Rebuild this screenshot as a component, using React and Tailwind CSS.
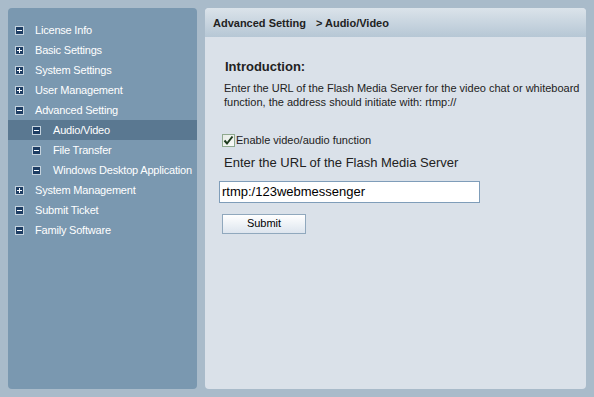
import React, { useState } from "react";

const menu = [
  { label: "License Info", icon: "minus" },
  { label: "Basic Settings", icon: "plus" },
  { label: "System Settings", icon: "plus" },
  { label: "User Management", icon: "plus" },
  { label: "Advanced Setting", icon: "minus" },
  { label: "Audio/Video", icon: "minus", sub: true, active: true },
  { label: "File Transfer", icon: "minus", sub: true },
  { label: "Windows Desktop Application", icon: "minus", sub: true },
  { label: "System Management", icon: "plus" },
  { label: "Submit Ticket", icon: "minus" },
  { label: "Family Software", icon: "minus" },
];

const TreeIcon = ({ type }) => (
  <span className="relative block w-[9px] h-[9px] bg-[#1d3d63] border border-[#c5d3de] shrink-0">
    <span className="absolute left-[1px] top-[3px] w-[5px] h-[1px] bg-white" />
    {type === "plus" && (
      <span className="absolute left-[3px] top-[1px] w-[1px] h-[5px] bg-white" />
    )}
  </span>
);

const font = { fontFamily: '"Liberation Sans", Arial, sans-serif' };

const App = () => {
  const [enabled, setEnabled] = useState(true);
  const [url, setUrl] = useState("rtmp:/123webmessenger");

  return (
    <div
      className="w-[594px] h-[397px] bg-[#a9bbca] p-2 flex gap-2 text-[#222]"
      style={font}
    >
      {/* Sidebar */}
      <div className="w-[189px] bg-[#7a98b0] rounded pt-[12px]">
        {menu.map((item) => (
          <div
            key={item.label}
            className={`h-5 flex items-center text-[11px] tracking-[-0.2px] text-white whitespace-nowrap ${
              item.sub ? "pl-6" : "pl-[7px]"
            } ${item.active ? "bg-[#5a7891]" : ""}`}
          >
            <TreeIcon type={item.icon} />
            <span className={item.sub ? "ml-[12px]" : "ml-[11px]"}>
              {item.label}
            </span>
          </div>
        ))}
      </div>

      {/* Main panel */}
      <div className="flex-1 bg-[#dae1e9] rounded flex flex-col">
        <div className="h-[29px] rounded-t bg-gradient-to-b from-[#dbe3ea] to-[#b6c7d5] flex items-center pl-2 pt-[2px] text-[11px] font-bold text-[#222]">
          <span>Advanced Setting</span>
          <span className="ml-[10px]">&gt; Audio/Video</span>
        </div>

        <div className="pl-5 pt-[21px]">
          <h2 className="text-[13px] font-bold leading-[18px] text-[#222]">
            Introduction:
          </h2>
          <p className="mt-[5px] text-[11px] leading-[14px] text-[#222] -ml-[1px]">
            Enter the URL of the Flash Media Server for the video chat or whiteboard
            <br />
            function, the address should initiate with: rtmp://
          </p>

          <label
            className="mt-[23px] flex items-center -ml-[3px] text-[11px] text-[#222] cursor-pointer"
            onClick={() => setEnabled(!enabled)}
          >
            <span className="w-[13px] h-[13px] border border-[#8fa98f] bg-gradient-to-br from-[#e6ebe6] to-[#f8faf8] flex items-center justify-center">
              {enabled && (
                <svg width="11" height="11" viewBox="0 0 11 11">
                  <path
                    d="M1.5 5.5 L4 8.5 L9.5 1.5"
                    fill="none"
                    stroke="#1d3a1d"
                    strokeWidth="2"
                  />
                </svg>
              )}
            </span>
            <span className="ml-[1px]">Enable video/audio function</span>
          </label>

          <div className="mt-[5px] text-[13px] leading-[18px] text-[#222] -ml-[1px]">
            Enter the URL of the Flash Media Server
          </div>

          <input
            type="text"
            value={url}
            onChange={(e) => setUrl(e.target.value)}
            className="mt-[9px] -ml-[6px] block w-[261px] h-[22px] bg-white border border-[#7f9db9] px-[2px] text-[13px] text-black outline-none"
            style={font}
          />

          <button
            className="mt-[11px] -ml-[3px] block w-[84px] h-[20px] border border-[#90a8bd] bg-gradient-to-b from-white to-[#dde5ee] text-[11px] text-black"
            style={font}
          >
            Submit
          </button>
        </div>
      </div>
    </div>
  );
};

export default App;
